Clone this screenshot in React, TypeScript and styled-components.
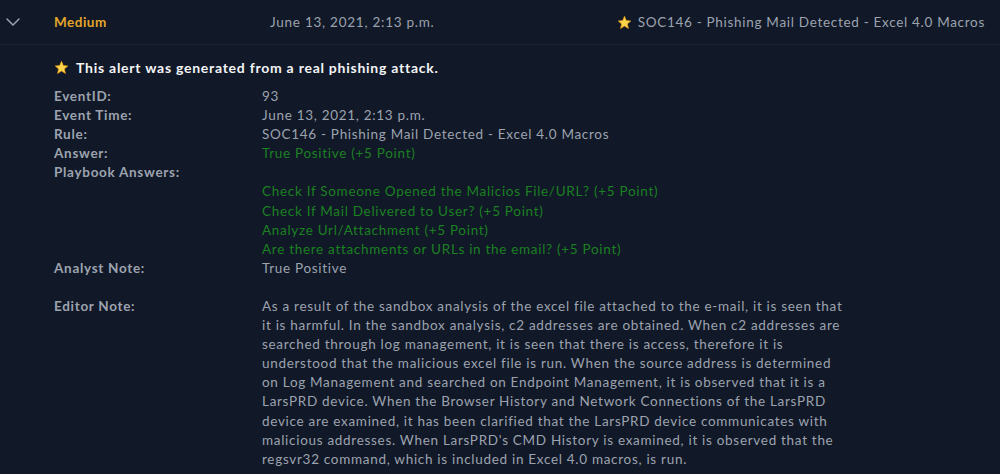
import styled, { createGlobalStyle } from 'styled-components';

const GlobalStyle = createGlobalStyle`
  html, body {
    margin: 0;
    padding: 0;
    background: #111827;
  }
  body {
    font-family: Lato, "Noto Sans", sans-serif;
    color: #9ca3af;
  }
`;

const Page = styled.div`
  width: 1000px;
  min-height: 474px;
  background: #111827;
`;

const HeaderRow = styled.div`
  display: grid;
  grid-template-columns: 54px 216px 1fr auto;
  align-items: center;
  height: 44px;
  padding-right: 15px;
  border-bottom: 1px solid #1c2435;
  font-size: 13.5px;
  letter-spacing: 0.7px;
`;

const Chevron = styled.div`
  display: flex;
  align-items: center;
  padding-left: 5px;
`;

const Severity = styled.span`
  color: #e3a52b;
  font-weight: 700;
  letter-spacing: 0.5px;
`;

const DateText = styled.span`
  color: #9ca3af;
  letter-spacing: 0.75px;
`;

const Title = styled.span`
  display: flex;
  align-items: center;
  gap: 6px;
  color: #9ca3af;
`;

const Body = styled.div`
  padding: 14px 0 0 54px;
  font-size: 13.5px;
  letter-spacing: 0.7px;
`;

const Notice = styled.div`
  display: flex;
  align-items: center;
  gap: 7px;
  color: #f3f4f6;
  font-weight: 700;
  font-size: 14px;
  letter-spacing: 0.75px;
  margin-bottom: 11px;
`;

const Details = styled.div`
  display: grid;
  grid-template-columns: 208px 620px;
  line-height: 19.1px;
`;

const Label = styled.div<{ $gap?: number }>`
  font-weight: 700;
  color: #9ca3af;
  margin-top: ${(p) => p.$gap ?? 0}px;
`;

const Value = styled.div<{ $green?: boolean; $gap?: number }>`
  color: ${(p) => (p.$green ? '#1b8022' : '#9ca3af')};
  margin-top: ${(p) => p.$gap ?? 0}px;
`;

const NoteLine = styled.span`
  display: block;
  white-space: nowrap;
`;

const Star = ({ size = 14 }: { size?: number }) => (
  <svg width={size} height={size} viewBox="0 0 24 24">
    <path
      d="M12 2l2.9 6.9 7.1.6-5.4 4.7 1.7 7.3L12 17.6 5.7 21.5l1.7-7.3L2 9.5l7.1-.6z"
      fill="#fcd34d"
      stroke="#f59e0b"
      strokeWidth="1"
      strokeLinejoin="round"
    />
  </svg>
);

const playbook = [
  'Check If Someone Opened the Malicios File/URL? (+5 Point)',
  'Check If Mail Delivered to User? (+5 Point)',
  'Analyze Url/Attachment (+5 Point)',
  'Are there attachments or URLs in the email? (+5 Point)',
];

const editorNote = [
  'As a result of the sandbox analysis of the excel file attached to the e-mail, it is seen that',
  'it is harmful. In the sandbox analysis, c2 addresses are obtained. When c2 addresses are',
  'searched through log management, it is seen that there is access, therefore it is',
  'understood that the malicious excel file is run. When the source address is determined',
  'on Log Management and searched on Endpoint Management, it is observed that it is a',
  'LarsPRD device. When the Browser History and Network Connections of the LarsPRD',
  'device are examined, it has been clarified that the LarsPRD device communicates with',
  "malicious addresses. When LarsPRD's CMD History is examined, it is observed that the",
  'regsvr32 command, which is included in Excel 4.0 macros, is run.',
];

function App() {
  return (
    <Page>
      <GlobalStyle />
      <HeaderRow>
        <Chevron>
          <svg width="16" height="16" viewBox="0 0 16 16" fill="none">
            <path d="M2 5l6 6 6-6" stroke="#9ca3af" strokeWidth="1.5" strokeLinecap="round" strokeLinejoin="round" />
          </svg>
        </Chevron>
        <Severity>Medium</Severity>
        <DateText>June 13, 2021, 2:13 p.m.</DateText>
        <Title>
          <Star size={15} />
          SOC146 - Phishing Mail Detected - Excel 4.0 Macros
        </Title>
      </HeaderRow>
      <Body>
        <Notice>
          <Star size={15} />
          This alert was generated from a real phishing attack.
        </Notice>
        <Details>
          <Label>EventID:</Label>
          <Value>93</Value>
          <Label>Event Time:</Label>
          <Value>June 13, 2021, 2:13 p.m.</Value>
          <Label>Rule:</Label>
          <Value>SOC146 - Phishing Mail Detected - Excel 4.0 Macros</Value>
          <Label>Answer:</Label>
          <Value $green>True Positive (+5 Point)</Value>
          <Label>Playbook Answers:</Label>
          <Value />
          {playbook.map((p) => (
            <>
              <div key={p + 'l'} />
              <Value key={p} $green>
                {p}
              </Value>
            </>
          ))}
          <Label>Analyst Note:</Label>
          <Value>True Positive</Value>
          <Label $gap={19}>Editor Note:</Label>
          <Value $gap={19}>
            {editorNote.map((line) => (
              <NoteLine key={line}>{line}</NoteLine>
            ))}
          </Value>
        </Details>
      </Body>
    </Page>
  );
}

export default App;
